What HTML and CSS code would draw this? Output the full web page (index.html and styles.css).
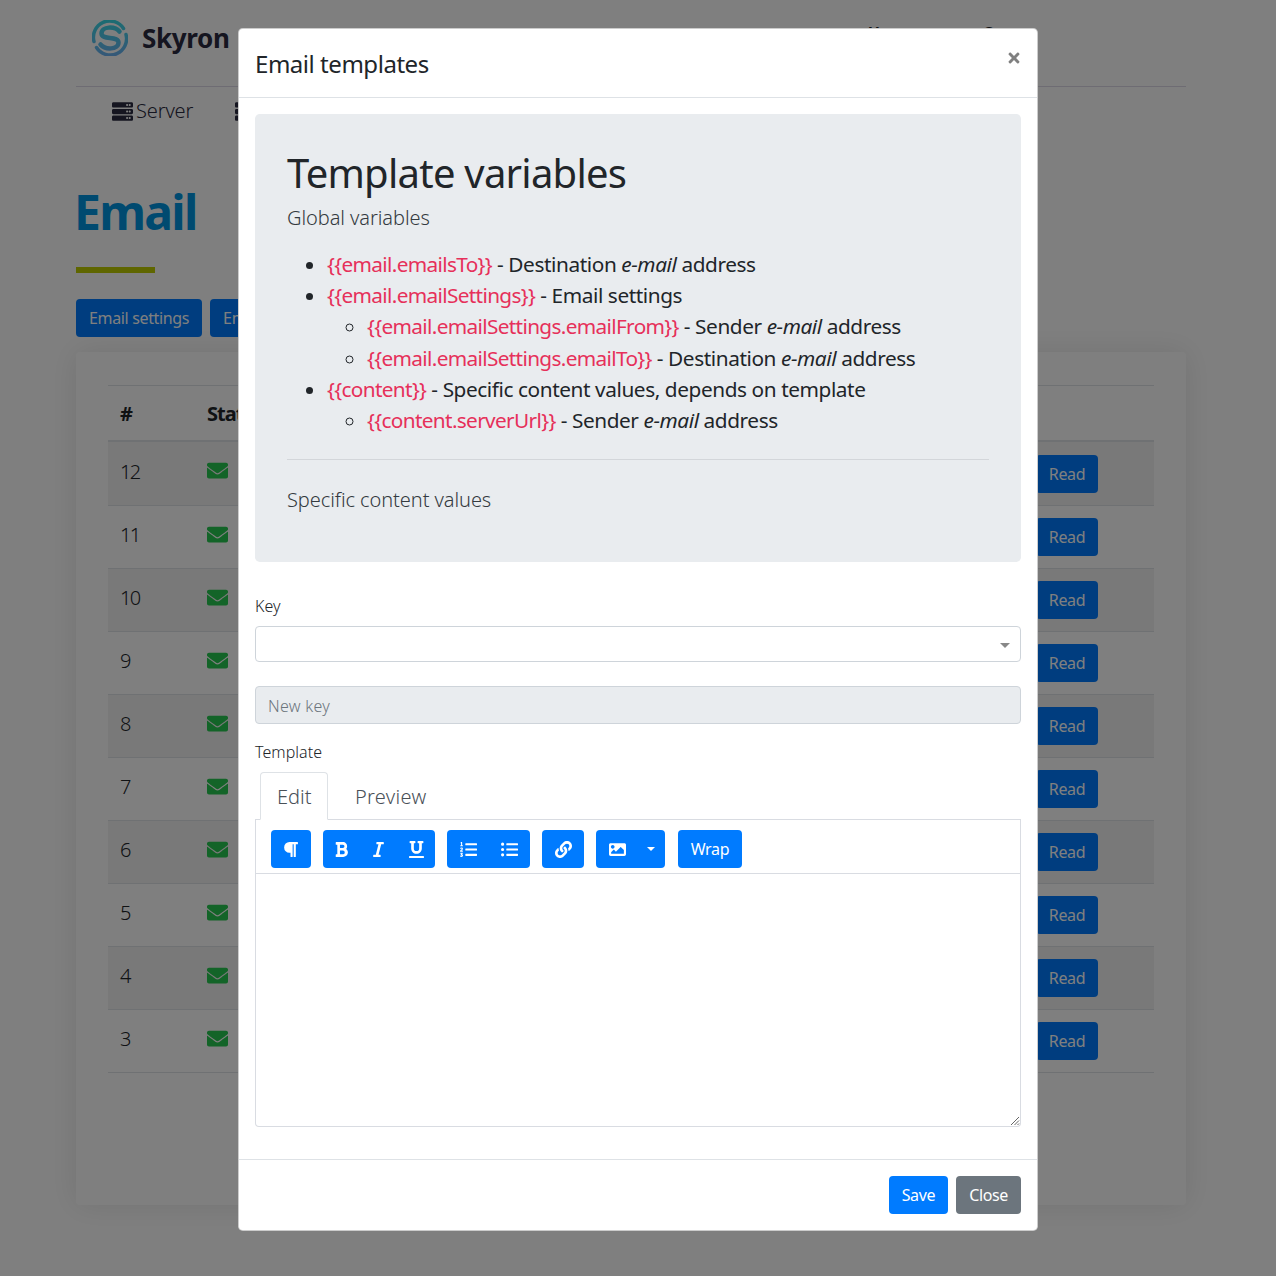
FILE: index.html
```html
<!DOCTYPE html>
<html lang="en">
<head>
<meta charset="utf-8">
<title>Email templates</title>
<link rel="stylesheet" href="styles.css">
</head>
<body>
<svg class="defs" aria-hidden="true">
  <symbol id="i-env" viewBox="0 0 512 512"><path d="M502.3 190.8c3.9-3.1 9.7-.2 9.7 4.7V400c0 26.5-21.5 48-48 48H48c-26.5 0-48-21.5-48-48V195.6c0-5 5.7-7.8 9.7-4.7 22.4 17.4 52.1 39.5 154.1 113.6 21.1 15.4 56.7 47.8 92.2 47.6 35.7.3 72-32.8 92.3-47.6 102-74.1 131.6-96.3 154-113.7zM256 320c23.2.4 56.6-29.2 73.4-41.4 132.7-96.3 142.8-104.7 173.4-128.7 5.8-4.5 9.2-11.5 9.2-18.9v-19c0-26.5-21.5-48-48-48H48C21.5 64 0 85.5 0 112v19c0 7.4 3.4 14.3 9.2 18.9 30.6 23.9 40.7 32.4 173.4 128.7 16.8 12.2 50.2 41.8 73.4 41.4z"/></symbol>
  <symbol id="i-server" viewBox="0 0 512 512"><path d="M480 160H32c-17.673 0-32-14.327-32-32V64c0-17.673 14.327-32 32-32h448c17.673 0 32 14.327 32 32v64c0 17.673-14.327 32-32 32zm-48-88c-13.255 0-24 10.745-24 24s10.745 24 24 24 24-10.745 24-24-10.745-24-24-24zm-64 0c-13.255 0-24 10.745-24 24s10.745 24 24 24 24-10.745 24-24-10.745-24-24-24zm112 248H32c-17.673 0-32-14.327-32-32v-64c0-17.673 14.327-32 32-32h448c17.673 0 32 14.327 32 32v64c0 17.673-14.327 32-32 32zm-48-88c-13.255 0-24 10.745-24 24s10.745 24 24 24 24-10.745 24-24-10.745-24-24-24zm-64 0c-13.255 0-24 10.745-24 24s10.745 24 24 24 24-10.745 24-24-10.745-24-24-24zm112 248H32c-17.673 0-32-14.327-32-32v-64c0-17.673 14.327-32 32-32h448c17.673 0 32 14.327 32 32v64c0 17.673-14.327 32-32 32zm-48-88c-13.255 0-24 10.745-24 24s10.745 24 24 24 24-10.745 24-24-10.745-24-24-24zm-64 0c-13.255 0-24 10.745-24 24s10.745 24 24 24 24-10.745 24-24-10.745-24-24-24z"/></symbol>
  <symbol id="i-times" viewBox="0 0 352 512"><path d="M242.72 256l100.07-100.07c12.28-12.28 12.28-32.19 0-44.48l-22.24-22.24c-12.28-12.28-32.19-12.28-44.48 0L176 189.28 75.93 89.21c-12.28-12.28-32.19-12.28-44.48 0L9.21 111.45c-12.28 12.28-12.28 32.19 0 44.48L109.28 256 9.21 356.07c-12.28 12.28-12.28 32.19 0 44.48l22.24 22.24c12.28 12.28 32.2 12.28 44.48 0L176 322.72l100.07 100.07c12.28 12.28 32.2 12.28 44.48 0l22.24-22.24c12.28-12.28 12.28-32.19 0-44.48L242.72 256z"/></symbol>
  <symbol id="i-par" viewBox="0 0 448 512"><path d="M448 48v32a16 16 0 0 1-16 16h-48v368a16 16 0 0 1-16 16h-32a16 16 0 0 1-16-16V96h-32v368a16 16 0 0 1-16 16h-32a16 16 0 0 1-16-16V352h-32a160 160 0 0 1 0-320h240a16 16 0 0 1 16 16z"/></symbol>
  <symbol id="i-bold" viewBox="0 0 384 512"><path d="M333.49 238a122 122 0 0 0 27-65.21C367.87 96.49 308 32 233.42 32H34a16 16 0 0 0-16 16v48a16 16 0 0 0 16 16h31.87v288H34a16 16 0 0 0-16 16v48a16 16 0 0 0 16 16h209.32c70.8 0 134.14-51.75 141-122.4 4.74-48.45-16.39-92.06-50.83-119.6zM145.66 112h87.76a48 48 0 0 1 0 96h-87.76zm87.76 288h-87.76V288h87.76a56 56 0 0 1 0 112z"/></symbol>
  <symbol id="i-italic" viewBox="0 0 320 512"><path d="M320 48v32a16 16 0 0 1-16 16h-62.76l-80 320H208a16 16 0 0 1 16 16v32a16 16 0 0 1-16 16H16a16 16 0 0 1-16-16v-32a16 16 0 0 1 16-16h62.76l80-320H112a16 16 0 0 1-16-16V48a16 16 0 0 1 16-16h192a16 16 0 0 1 16 16z"/></symbol>
  <symbol id="i-under" viewBox="0 0 448 512"><path d="M32 64h32v160c0 88.22 71.78 160 160 160s160-71.78 160-160V64h32a16 16 0 0 0 16-16V16a16 16 0 0 0-16-16H272a16 16 0 0 0-16 16v32a16 16 0 0 0 16 16h32v160a80 80 0 0 1-160 0V64h32a16 16 0 0 0 16-16V16a16 16 0 0 0-16-16H32a16 16 0 0 0-16 16v32a16 16 0 0 0 16 16zm400 384H16a16 16 0 0 0-16 16v32a16 16 0 0 0 16 16h416a16 16 0 0 0 16-16v-32a16 16 0 0 0-16-16z"/></symbol>
  <symbol id="i-ol" viewBox="0 0 512 512"><path d="M61.77 401l17.5-20.15a19.92 19.92 0 0 0 5.07-14.19v-3.31C84.34 356 80.5 352 73 352H16a8 8 0 0 0-8 8v16a8 8 0 0 0 8 8h22.83a157.41 157.41 0 0 0-11 12.31l-5.61 7c-4 5.07-5.25 10.13-2.8 14.88l1.05 1.93c3 5.76 6.29 7.88 12.25 7.88h4.73c10.33 0 15.94 2.44 15.94 9.09 0 4.72-4.2 8.22-14.36 8.22a41.54 41.54 0 0 1-15.47-3.12c-6.49-3.88-11.74-3.5-15.6 3.12l-5.59 9.31c-3.72 6.13-3.19 11.72 2.63 15.94 7.71 4.69 20.38 9.44 37 9.44 34.16 0 48.5-22.75 48.5-44.12-.03-14.38-9.12-29.76-28.73-34.88zM496 224H176a16 16 0 0 0-16 16v32a16 16 0 0 0 16 16h320a16 16 0 0 0 16-16v-32a16 16 0 0 0-16-16zm0-160H176a16 16 0 0 0-16 16v32a16 16 0 0 0 16 16h320a16 16 0 0 0 16-16V80a16 16 0 0 0-16-16zm0 320H176a16 16 0 0 0-16 16v32a16 16 0 0 0 16 16h320a16 16 0 0 0 16-16v-32a16 16 0 0 0-16-16zM16 160h64a8 8 0 0 0 8-8v-16a8 8 0 0 0-8-8H64V40a8 8 0 0 0-8-8H32a8 8 0 0 0-7.14 4.42l-8 16A8 8 0 0 0 24 64h8v64H16a8 8 0 0 0-8 8v16a8 8 0 0 0 8 8zm-3.91 160H80a8 8 0 0 0 8-8v-16a8 8 0 0 0-8-8H41.32c3.29-10.29 48.34-18.68 48.34-56.44 0-29.06-25-39.56-44.47-39.56-21.36 0-33.8 10-40.46 18.75-4.37 5.59-3 10.84 2.8 15.37l8.58 6.88c5.61 4.56 11 2.47 16.12-2.44a13.44 13.44 0 0 1 9.46-3.84c3.33 0 9.28 1.56 9.28 8.75C51 267.37 0 276.42 0 304.55V308c0 7.94 5.09 12 12.09 12z"/></symbol>
  <symbol id="i-ul" viewBox="0 0 512 512"><path d="M48 48a48 48 0 1 0 48 48 48 48 0 0 0-48-48zm0 160a48 48 0 1 0 48 48 48 48 0 0 0-48-48zm0 160a48 48 0 1 0 48 48 48 48 0 0 0-48-48zm448 16H176a16 16 0 0 0-16 16v32a16 16 0 0 0 16 16h320a16 16 0 0 0 16-16v-32a16 16 0 0 0-16-16zm0-320H176a16 16 0 0 0-16 16v32a16 16 0 0 0 16 16h320a16 16 0 0 0 16-16V80a16 16 0 0 0-16-16zm0 160H176a16 16 0 0 0-16 16v32a16 16 0 0 0 16 16h320a16 16 0 0 0 16-16v-32a16 16 0 0 0-16-16z"/></symbol>
  <symbol id="i-link" viewBox="0 0 512 512"><path d="M326.612 185.391c59.747 59.809 58.927 155.698.36 214.59-.11.12-.24.25-.36.37l-67.2 67.2c-59.27 59.27-155.699 59.262-214.96 0-59.27-59.26-59.27-155.7 0-214.96l37.106-37.106c9.84-9.84 26.786-3.3 27.294 10.606.648 17.722 3.826 35.527 9.69 52.721 1.986 5.822.567 12.262-3.783 16.612l-13.087 13.087c-28.026 28.026-28.905 73.66-1.155 101.96 28.024 28.579 74.086 28.749 102.325.51l67.2-67.19c28.191-28.191 28.073-73.757 0-101.83-3.701-3.694-7.429-6.564-10.341-8.569a16.037 16.037 0 0 1-6.947-12.606c-.396-10.567 3.348-21.456 11.698-29.806l21.054-21.055c5.521-5.521 14.182-6.199 20.584-1.731a152.482 152.482 0 0 1 20.522 17.197zM467.547 44.449c-59.261-59.262-155.69-59.27-214.96 0l-67.2 67.2c-.12.12-.25.25-.36.37-58.566 58.892-59.387 154.781.36 214.59a152.454 152.454 0 0 0 20.521 17.196c6.402 4.468 15.064 3.789 20.584-1.731l21.054-21.055c8.35-8.35 12.094-19.239 11.698-29.806a16.037 16.037 0 0 0-6.947-12.606c-2.912-2.005-6.64-4.875-10.341-8.569-28.073-28.073-28.191-73.639 0-101.83l67.2-67.19c28.239-28.239 74.3-28.069 102.325.51 27.75 28.3 26.872 73.934-1.155 101.96l-13.087 13.087c-4.35 4.35-5.769 10.79-3.783 16.612 5.864 17.194 9.042 34.999 9.69 52.721.509 13.906 17.454 20.446 27.294 10.606l37.106-37.106c59.271-59.259 59.271-155.699.001-214.959z"/></symbol>
  <symbol id="i-image" viewBox="0 0 512 512"><path d="M464 448H48c-26.51 0-48-21.49-48-48V112c0-26.51 21.49-48 48-48h416c26.51 0 48 21.49 48 48v288c0 26.51-21.49 48-48 48zM112 120c-30.928 0-56 25.072-56 56s25.072 56 56 56 56-25.072 56-56-25.072-56-56-56zM64 384h384V272l-87.515-87.515c-4.686-4.686-12.284-4.686-16.971 0L208 320l-55.515-55.515c-4.686-4.686-12.284-4.686-16.971 0L64 336v48z"/></symbol>
</svg>

<div class="page">
  <header class="topbar">
    <div class="brand">
      <svg class="logo" viewBox="0 0 36 36">
        <defs>
          <linearGradient id="lg" gradientUnits="userSpaceOnUse" x1="0" y1="0" x2="0" y2="36">
            <stop offset="0" stop-color="#38d8e4"/><stop offset="1" stop-color="#6cb0f0"/>
          </linearGradient>
        </defs>
        <g class="logo-lines" stroke="url(#lg)">
          <path class="logo-s" d="M27.5 11.5C23 6 9.500 6 9.500 13.5 9.500 20.500 26.500 15.500 26.500 22.500 26.500 30 13 30 8.500 24.500"/>
          <path class="logo-arc" d="M2 21.500A16.300 16.300 0 0 1 31.500 8.500"/>
          <path class="logo-arc" d="M34 14.500A16.300 16.300 0 0 1 4.500 27.500"/>
        </g>
      </svg>
      <span class="brand-name">Skyron</span>
    </div>
    <div class="top-right">
      <span class="peek">H</span>
      <span class="peek">O</span>
    </div>
  </header>
  <nav class="navrow">
    <span class="nav-item"><svg class="nav-ico"><use href="#i-server"/></svg>Server</span>
    <span class="nav-item"><svg class="nav-ico"><use href="#i-server"/></svg>Jobs</span>
  </nav>
  <h1 class="page-title">Email</h1>
  <div class="title-bar"></div>
  <div class="page-actions">
    <a class="btn">Email settings</a>
    <a class="btn">Email templates</a>
  </div>
  <section class="card">
    <div class="table">
      <div class="row head"><span class="c-id">#</span><span>Status</span></div>
      <div class="row odd"><span class="c-id">12</span><svg class="env"><use href="#i-env"/></svg><a class="btn read">Read</a></div>
      <div class="row"><span class="c-id">11</span><svg class="env"><use href="#i-env"/></svg><a class="btn read">Read</a></div>
      <div class="row odd"><span class="c-id">10</span><svg class="env"><use href="#i-env"/></svg><a class="btn read">Read</a></div>
      <div class="row"><span class="c-id">9</span><svg class="env"><use href="#i-env"/></svg><a class="btn read">Read</a></div>
      <div class="row odd"><span class="c-id">8</span><svg class="env"><use href="#i-env"/></svg><a class="btn read">Read</a></div>
      <div class="row"><span class="c-id">7</span><svg class="env"><use href="#i-env"/></svg><a class="btn read">Read</a></div>
      <div class="row odd"><span class="c-id">6</span><svg class="env"><use href="#i-env"/></svg><a class="btn read">Read</a></div>
      <div class="row"><span class="c-id">5</span><svg class="env"><use href="#i-env"/></svg><a class="btn read">Read</a></div>
      <div class="row odd"><span class="c-id">4</span><svg class="env"><use href="#i-env"/></svg><a class="btn read">Read</a></div>
      <div class="row"><span class="c-id">3</span><svg class="env"><use href="#i-env"/></svg><a class="btn read">Read</a></div>
    </div>
  </section>
</div>

<div class="backdrop">
  <div class="modal">
    <div class="modal-head">
      <h4 class="modal-title">Email templates</h4>
      <svg class="close"><use href="#i-times"/></svg>
    </div>
    <div class="modal-body">
      <div class="jumbo">
        <h2 class="jumbo-title">Template variables</h2>
        <p class="lead">Global variables</p>
        <ul class="vars">
          <li><code>{{email.emailsTo}}</code> - Destination <em>e-mail</em> address</li>
          <li><code>{{email.emailSettings}}</code> - Email settings
            <ul>
              <li><code>{{email.emailSettings.emailFrom}}</code> - Sender <em>e-mail</em> address</li>
              <li><code>{{email.emailSettings.emailTo}}</code> - Destination <em>e-mail</em> address</li>
            </ul>
          </li>
          <li><code>{{content}}</code> - Specific content values, depends on template
            <ul>
              <li><code>{{content.serverUrl}}</code> - Sender <em>e-mail</em> address</li>
            </ul>
          </li>
        </ul>
        <hr class="jumbo-rule">
        <p class="lead lead-end">Specific content values</p>
      </div>

      <label class="field-label">Key</label>
      <div class="select"><span class="caret"></span></div>
      <div class="input">New key</div>
      <label class="field-label">Template</label>

      <div class="tabs">
        <span class="tab active">Edit</span>
        <span class="tab">Preview</span>
      </div>
      <div class="toolbar">
        <div class="group"><span class="tool w40 tool-par"><svg class="ico"><use href="#i-par"/></svg></span></div>
        <div class="group">
          <span class="tool w37"><svg class="ico"><use href="#i-bold"/></svg></span>
          <span class="tool w37"><svg class="ico"><use href="#i-italic"/></svg></span>
          <span class="tool w38"><svg class="ico"><use href="#i-under"/></svg></span>
        </div>
        <div class="group">
          <span class="tool w42"><svg class="ico"><use href="#i-ol"/></svg></span>
          <span class="tool w41"><svg class="ico"><use href="#i-ul"/></svg></span>
        </div>
        <div class="group"><span class="tool w42"><svg class="ico"><use href="#i-link"/></svg></span></div>
        <div class="group">
          <span class="tool w43"><svg class="ico"><use href="#i-image"/></svg></span>
          <span class="tool w26"><span class="caret caret-white"></span></span>
        </div>
        <div class="group wrap-group"><span class="tool w64 tool-text">Wrap</span></div>
      </div>
      <div class="editor"><svg class="grip" viewBox="0 0 10 10"><path d="M9 1L1 9M9 4.500L4.500 9M9 7.500L7.500 9"/></svg></div>
    </div>
    <div class="modal-foot">
      <a class="btn">Save</a>
      <a class="btn btn-grey">Close</a>
    </div>
  </div>
</div>
</body>
</html>
```

FILE: styles.css
```css
* { box-sizing: border-box; }
html, body { margin: 0; height: 1276px; overflow: hidden; }
body {
  position: relative;
  background: #fff;
  font-family: "Noto Sans", "Open Sans", sans-serif;
  font-size: 16px;
  line-height: 1.5;
  color: #212529;
  letter-spacing: -0.32px;
}
.defs { position: absolute; width: 0; height: 0; }
svg { fill: currentColor; display: block; }

/* page behind the dialog */
.page { width: 1110px; margin: 0 0 0 76px; }
.topbar {
  height: 87px;
  display: flex;
  justify-content: space-between;
  border-bottom: 1px solid #dcd8e6;
  padding: 20px 0 0 16px;
}
.brand { display: flex; align-items: flex-start; gap: 14px; }
.logo { width: 36px; height: 36px; }
.logo-lines { fill: none; stroke-linecap: round; }
.logo-s { stroke-width: 4.5; }
.logo-arc { stroke-width: 3.5; }
.brand-name { font-size: 26px; font-weight: 700; line-height: 36px; color: #2a2a40; }
.top-right { display: flex; gap: 103px; padding: 1px 191px 0 0; }
.peek { font-size: 16px; font-weight: 700; color: #212529; }
.navrow { display: flex; gap: 42px; padding: 9px 0 0 36px; height: 63px; }
.nav-item { display: flex; align-items: center; height: 30px; font-size: 20px; font-weight: 300; color: #2a2a40; gap: 3px; letter-spacing: -0.15px; }
.nav-ico { width: 21px; height: 21px; }
.page-title {
  margin: 28px 0 0 -2px;
  font-size: 48px;
  line-height: 68px;
  font-weight: 700;
  letter-spacing: -1.72px;
  color: #0094e0;
  height: 68px;
}
.title-bar { width: 79px; height: 6px; margin-top: 21px; background: #becc00; }
.page-actions { display: flex; gap: 8px; margin-top: 26px; }
.btn {
  display: inline-flex;
  align-items: center;
  justify-content: center;
  height: 38px;
  padding: 0 13px;
  border-radius: 4px;
  background: #007bff;
  color: #fff;
  font-size: 16px;
  letter-spacing: -0.35px;
}
.btn-grey { background: #6c757d; }
.card {
  margin-top: 15px;
  height: 853px;
  padding: 33px 32px 0;
  background: #fff;
  border-radius: 4px;
  box-shadow: 0 0 30px rgba(0, 0, 0, 0.1);
}
.table { border-top: 1px solid #dee2e6; border-bottom: 1px solid #dee2e6; }
.row {
  display: flex;
  align-items: center;
  height: 63px;
  padding: 0 56px 0 12px;
  font-size: 20px;
  font-weight: 300;
}
.row + .row { border-top: 1px solid #dee2e6; }
.row.head { height: 56px; padding-top: 2px; font-weight: 700; font-size: 20px; border-bottom: 2px solid #dee2e6; letter-spacing: -1px; }
.row.head + .row { border-top: 0; }
.row.odd { background: rgba(0, 0, 0, 0.05); }
.c-id { width: 87px; letter-spacing: -1.6px; margin-top: -4px; }
.env { width: 21px; height: 21px; margin-top: -6px; color: #26c850; }
.row.head .c-id { margin-top: 0; }
.read { margin-left: auto; width: 62px; font-weight: 400; }

/* dialog */
.backdrop {
  position: absolute;
  inset: 0;
  background: rgba(0, 0, 0, 0.5);
  padding-top: 28px;
}
.modal {
  width: 800px;
  height: 1203px;
  margin: 0 auto;
  background: #fff;
  border: 1px solid rgba(0, 0, 0, 0.2);
  border-radius: 4.8px;
  display: flex;
  flex-direction: column;
}
.modal-head {
  height: 69px;
  flex: none;
  display: flex;
  justify-content: space-between;
  padding: 17px 17px 0 16px;
  border-bottom: 1px solid #dee2e6;
}
.modal-title { margin: 0; font-size: 24px; line-height: 36px; font-weight: 400; letter-spacing: -0.46px; }
.close { width: 12px; height: 16px; margin-top: 4px; color: #808080; }
.modal-body { flex: 1; padding: 16px; }
.jumbo {
  height: 448px;
  padding: 32px;
  background: #e9ecef;
  border-radius: 4.8px;
  margin-bottom: 32px;
}
.jumbo-title { margin: 0; font-size: 40px; line-height: 54px; font-weight: 400; letter-spacing: -0.76px; }
.lead { margin: 3px 0 0; font-size: 20px; line-height: 30px; font-weight: 300; color: #343a40; letter-spacing: -0.07px; }
.vars { margin: 16px 0 0; padding: 0 0 0 40px; font-size: 20.8px; line-height: 31.2px; letter-spacing: -0.42px; }
.vars ul { margin: 0; padding: 0 0 0 40px; list-style: circle; }
code { font-family: inherit; font-size: inherit; color: #e6305a; letter-spacing: -0.66px; }
.jumbo-rule { border: 0; border-top: 1px solid #d3d6da; margin: 23px 0 25px; }
.lead-end { margin: 0; }
.field-label { display: block; margin-bottom: 8px; height: 24px; font-weight: 300; letter-spacing: 0.05px; }
.select {
  height: 36px;
  border: 1px solid #ced4da;
  border-radius: 4px;
  margin-bottom: 24px;
  position: relative;
}
.caret {
  display: block;
  width: 0;
  height: 0;
  border-left: 5px solid transparent;
  border-right: 5px solid transparent;
  border-top: 5px solid #888;
}
.select .caret { position: absolute; right: 10px; top: 16px; }
.caret-white { border-left-width: 4px; border-right-width: 4px; border-top: 4px solid #fff; margin-right: 3px; }
.input {
  height: 38px;
  padding: 1px 12px 0;
  display: flex;
  align-items: center;
  background: #e9ecef;
  border: 1px solid #ced4da;
  border-radius: 4px;
  color: #6c757d;
  margin-bottom: 16px;
  font-weight: 300;
  letter-spacing: 0.3px;
}
.tabs { display: flex; padding-left: 5px; height: 47px; }
.tab {
  height: 48px;
  padding: 2px 16px 0;
  margin-right: 10px;
  display: flex;
  align-items: center;
  font-size: 20px;
  font-weight: 300;
  letter-spacing: 0.3px;
  color: #495057;
  border: 1px solid transparent;
  border-radius: 4px 4px 0 0;
  position: relative;
}
.tab.active { width: 68px; border-color: #dee2e6 #dee2e6 #fff; background: #fff; z-index: 1; letter-spacing: 0; }
.toolbar {
  height: 55px;
  display: flex;
  gap: 12px;
  padding: 10px 15px 0;
  border: 1px solid #d9dce2;
}
.group { display: flex; height: 38px; background: #007bff; border-radius: 4px; color: #fff; }
.wrap-group { margin-left: 1px; }
.tool { display: flex; align-items: center; justify-content: center; height: 38px; }
.tool-par { padding-right: 1px; }
.tool-text { font-size: 16px; }
.w26 { width: 26px; }
.w37 { width: 37px; }
.w38 { width: 38px; }
.w40 { width: 40px; }
.w41 { width: 41px; }
.w42 { width: 42px; }
.w43 { width: 43px; }
.w64 { width: 64px; }
.ico { width: 17px; height: 17px; }
.editor {
  height: 253px;
  position: relative;
  border: 1px solid #d9dce2;
  border-top: 0;
  border-radius: 0 0 4px 4px;
}
.grip { position: absolute; right: 0; bottom: 0; width: 10px; height: 10px; fill: none; stroke: #666; stroke-width: 1; }
.modal-foot {
  flex: none;
  height: 71px;
  display: flex;
  justify-content: flex-end;
  gap: 8px;
  padding: 16px 16px 0;
  border-top: 1px solid #dee2e6;
}
```
